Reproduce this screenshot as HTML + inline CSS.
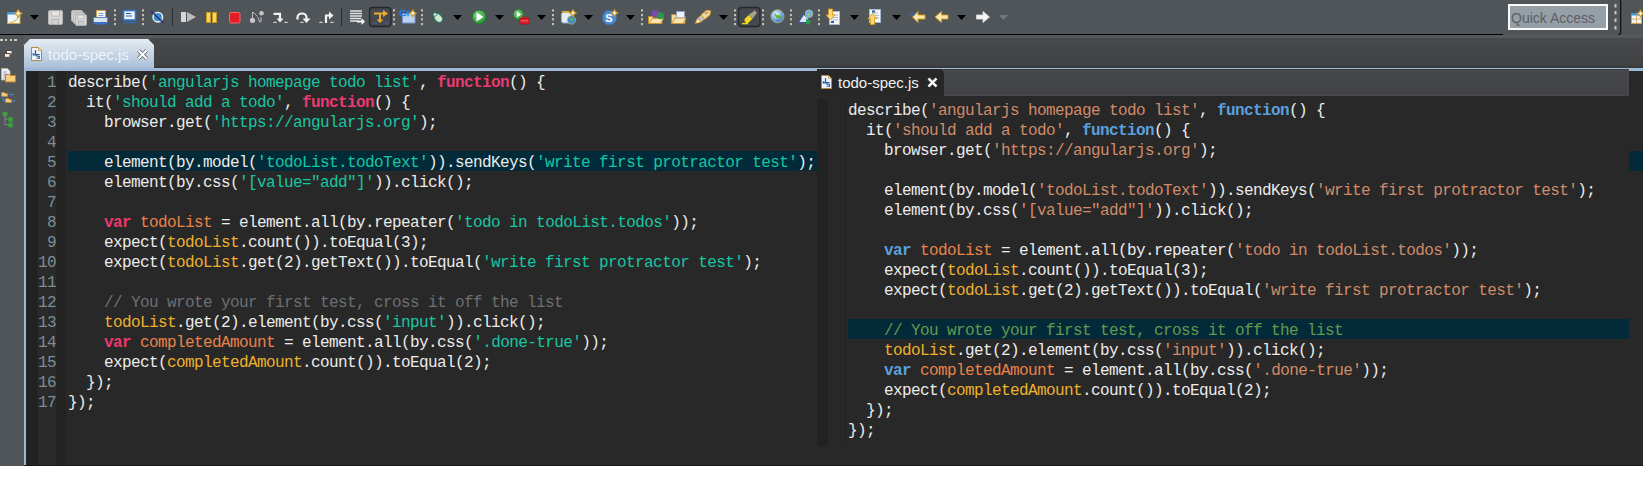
<!DOCTYPE html>
<html><head><meta charset="utf-8">
<style>
*{margin:0;padding:0;box-sizing:border-box}
html,body{width:1643px;height:489px;overflow:hidden;background:#fff}
body{position:relative;font-family:"Liberation Sans",sans-serif}
.a{position:absolute}
#tb{left:0;top:0;width:1643px;height:35px;background:#50555a}
#tbl2{left:0;top:35px;width:1643px;height:3px;background:#54595d}
#tbline{left:0;top:34px;width:1503px;height:1px;background:#020202}
#main{left:0;top:35px;width:1643px;height:431px;background:#54595d}
#side{left:0;top:35px;width:24px;height:431px;background:#50565a}
#tabbar{left:150px;top:38px;width:1493px;height:30px;background:linear-gradient(#48494c,#404143 95%,#38393a 95%)}
#tab1{left:24px;top:39px;width:130px;height:30px;clip-path:polygon(6px 0,124px 0,130px 6px,130px 30px,0 30px,0 6px);background:linear-gradient(#e6ecf2,#a7bdd7)}
#blue-h{left:24px;top:68px;width:1619px;height:3px;background:#9db8d9}
#blue-v{left:24px;top:68px;width:2px;height:398px;background:#9db8d9}
#ed{left:26px;top:71px;width:1617px;height:395px;background:#282828}
#c1{left:26px;top:71px;width:12px;height:395px;background:#222222}
#c2{left:38px;top:71px;width:18px;height:395px;background:#2a2a2a}
#c3{left:56px;top:71px;width:10px;height:395px;background:#232323}
#hl1{left:68px;top:151px;width:1575px;height:20px;background:#032a38}
#edbot{left:24px;top:465px;width:1619px;height:1px;background:#1a1a1a}
pre{font-family:"Liberation Mono",monospace;font-size:16px;letter-spacing:-0.6px;line-height:20px;color:#ececec;white-space:pre}
#nums{left:38px;top:73px;width:18px;text-align:right;color:#7d8d95}
#code1{left:68px;top:73px}
#code1 .s{color:#17c6a3}
#code1 .k{color:#ea3a72;font-weight:bold}
#code1 .vd{color:#e8834a}
#code1 .vr{color:#eeb12c}
#code1 .c{color:#6c7074}
.ttl{font-size:15px;white-space:nowrap}
#t1txt{left:48px;top:46px;color:#eef3f8}
/* overlay */
#ov{left:817px;top:69px;width:812px;height:396px;background:#282828;overflow:hidden}
#ovbar{left:0;top:0;width:812px;height:27px;background:linear-gradient(#3a3b3c 1px,#47484b 1px,#424345);border-bottom:1px solid #4a4a4c;border-right:1px solid #4a4a4c}
#ovtab{left:0;top:0;width:127px;height:27px;background:#272727;border-radius:0 5px 0 0}
#ovc1{left:0;top:30px;width:11px;height:347px;background:#222222}
#ovln{left:28px;top:30px;width:1px;height:347px;background:#222222}
#hl2{left:31px;top:250px;width:781px;height:20px;background:#032a38}
#code2{left:31px;top:32px}
#code2 .s{color:#d08b68}
#code2 .k{color:#5ba0de;font-weight:bold}
#code2 .vd{color:#e8834a}
#code2 .vr{color:#eeb12c}
#code2 .c{color:#62994f}
#t2txt{left:21px;top:5px;color:#f0f0f0}
#qa{left:1508px;top:4px;width:100px;height:26px;border:2px solid #fafafa;background:#969ea6}
#qatxt{left:1511px;top:10px;font-size:14px;color:#5b5f68}
</style></head><body>
<div class="a" id="tb"></div>
<div class="a" id="tbline"></div>
<div class="a" id="main"></div>
<div class="a" id="tbl2"></div>
<div class="a" id="side"></div>
<div class="a" id="tabbar"></div>
<div class="a" id="tab1"></div>
<div class="a ttl" id="t1txt">todo-spec.js</div>
<div class="a" id="blue-h"></div>
<div class="a" id="blue-v"></div>
<div class="a" id="ed"></div>
<div class="a" id="c1"></div>
<div class="a" id="c2"></div>
<div class="a" id="c3"></div>
<div class="a" id="hl1"></div>
<div class="a" id="edbot"></div>
<pre class="a" id="nums">1
2
3
4
5
6
7
8
9
10
11
12
13
14
15
16
17</pre>
<pre class="a" id="code1">describe(<span class="s">&#x27;angularjs homepage todo list&#x27;</span>, <span class="k">function</span>() {
  it(<span class="s">&#x27;should add a todo&#x27;</span>, <span class="k">function</span>() {
    browser.get(<span class="s">&#x27;https://angularjs.org&#x27;</span>);

    element(by.model(<span class="s">&#x27;todoList.todoText&#x27;</span>)).sendKeys(<span class="s">&#x27;write first protractor test&#x27;</span>);
    element(by.css(<span class="s">&#x27;[value=&quot;add&quot;]&#x27;</span>)).click();

    <span class="k">var</span> <span class="vd">todoList</span> = element.all(by.repeater(<span class="s">&#x27;todo in todoList.todos&#x27;</span>));
    expect(<span class="vr">todoList</span>.count()).toEqual(3);
    expect(<span class="vr">todoList</span>.get(2).getText()).toEqual(<span class="s">&#x27;write first protractor test&#x27;</span>);

    <span class="c">// You wrote your first test, cross it off the list</span>
    <span class="vr">todoList</span>.get(2).element(by.css(<span class="s">&#x27;input&#x27;</span>)).click();
    <span class="k">var</span> <span class="vd">completedAmount</span> = element.all(by.css(<span class="s">&#x27;.done-true&#x27;</span>));
    expect(<span class="vr">completedAmount</span>.count()).toEqual(2);
  });
});</pre>
<div class="a" id="ov">
 <div class="a" id="ovbar"></div>
 <div class="a" id="ovtab"></div>
 <div class="a ttl" id="t2txt">todo-spec.js</div>
 <div class="a" id="ovc1"></div>
 <div class="a" id="ovln"></div>
 <div class="a" id="hl2"></div>
 <pre class="a" id="code2">describe(<span class="s">&#x27;angularjs homepage todo list&#x27;</span>, <span class="k">function</span>() {
  it(<span class="s">&#x27;should add a todo&#x27;</span>, <span class="k">function</span>() {
    browser.get(<span class="s">&#x27;https://angularjs.org&#x27;</span>);

    element(by.model(<span class="s">&#x27;todoList.todoText&#x27;</span>)).sendKeys(<span class="s">&#x27;write first protractor test&#x27;</span>);
    element(by.css(<span class="s">&#x27;[value=&quot;add&quot;]&#x27;</span>)).click();

    <span class="k">var</span> <span class="vd">todoList</span> = element.all(by.repeater(<span class="s">&#x27;todo in todoList.todos&#x27;</span>));
    expect(<span class="vr">todoList</span>.count()).toEqual(3);
    expect(<span class="vr">todoList</span>.get(2).getText()).toEqual(<span class="s">&#x27;write first protractor test&#x27;</span>);

    <span class="c">// You wrote your first test, cross it off the list</span>
    <span class="vr">todoList</span>.get(2).element(by.css(<span class="s">&#x27;input&#x27;</span>)).click();
    <span class="k">var</span> <span class="vd">completedAmount</span> = element.all(by.css(<span class="s">&#x27;.done-true&#x27;</span>));
    expect(<span class="vr">completedAmount</span>.count()).toEqual(2);
  });
});</pre>
</div>
<div class="a" id="qa"></div>
<div class="a" id="qatxt">Quick Access</div>
<svg class="a" style="left:0;top:0" width="1643" height="35"><rect x="7.5" y="12.5" width="12.5" height="11" fill="#eef6fc" stroke="#c9a24a"/><rect x="7" y="12" width="9" height="2.5" fill="#3b9ad9"/><path d="M9 23 Q17 22 19 15" stroke="#e5c36a" fill="none" stroke-width="1.2"/><path d="M18.2 9.600000000000001L19.567999999999998 12.032L22.0 13.4L19.567999999999998 14.768L18.2 17.2L16.832 14.768L14.399999999999999 13.4L16.832 12.032z" fill="#fff4c8" stroke="#c8922a" stroke-width="1.1" stroke-linejoin="round"/><path d="M30 15h9l-4.5 5z" fill="#000"/><rect x="48.5" y="10.5" width="14" height="14" rx="1.5" fill="#d6d6d6" stroke="#b4b4b4"/><rect x="51.5" y="11" width="8.0" height="5.0" fill="#e6e6e6" stroke="#b0b0b0" stroke-width=".7"/><rect x="52.0" y="19.5" width="6.5" height="5.0" fill="#cfcfcf" stroke="#a8a8a8" stroke-width=".7"/><rect x="71.5" y="10.5" width="11" height="11" rx="1.5" fill="#d6d6d6" stroke="#b4b4b4"/><rect x="73.75" y="11" width="6.285714285714286" height="3.9285714285714284" fill="#e6e6e6" stroke="#b0b0b0" stroke-width=".7"/><rect x="74.14285714285714" y="17.464285714285715" width="5.107142857142857" height="3.9285714285714284" fill="#cfcfcf" stroke="#a8a8a8" stroke-width=".7"/><rect x="73.5" y="12.5" width="11" height="11" rx="1.5" fill="#d6d6d6" stroke="#b4b4b4"/><rect x="75.75" y="13" width="6.285714285714286" height="3.9285714285714284" fill="#e6e6e6" stroke="#b0b0b0" stroke-width=".7"/><rect x="76.14285714285714" y="19.464285714285715" width="5.107142857142857" height="3.9285714285714284" fill="#cfcfcf" stroke="#a8a8a8" stroke-width=".7"/><rect x="75.5" y="14.5" width="11" height="11" rx="1.5" fill="#d6d6d6" stroke="#b4b4b4"/><rect x="77.75" y="15" width="6.285714285714286" height="3.9285714285714284" fill="#e6e6e6" stroke="#b0b0b0" stroke-width=".7"/><rect x="78.14285714285714" y="21.464285714285715" width="5.107142857142857" height="3.9285714285714284" fill="#cfcfcf" stroke="#a8a8a8" stroke-width=".7"/><rect x="96.5" y="10.5" width="9" height="9" fill="#f4f4f4" stroke="#c9a24a"/><path d="M98.5 13.5h5M98.5 15.5h5" stroke="#5a7cc0" stroke-width=".7"/><rect x="93.5" y="17.5" width="14" height="5" rx="1" fill="#d8e2ee" stroke="#5a86c8"/><rect x="94" y="22" width="13" height="2.5" fill="#3e6fc2"/><rect x="114" y="9.3" width="2" height="2.2" fill="#c4beab"/><rect x="114" y="14" width="2" height="2.2" fill="#c4beab"/><rect x="114" y="18.2" width="2" height="2.2" fill="#c4beab"/><rect x="114" y="23" width="2" height="2.2" fill="#c4beab"/><rect x="123.5" y="10.5" width="12" height="9.5" fill="#eef4fc" stroke="#2f74c8" stroke-width="1.6"/><path d="M126 13.5h5M126 16h6" stroke="#2f5fa8" stroke-width="1"/><path d="M124 22.6h11" stroke="#2f6cc0" stroke-width="1.2"/><rect x="142" y="9.3" width="2" height="2.2" fill="#c4beab"/><rect x="142" y="14" width="2" height="2.2" fill="#c4beab"/><rect x="142" y="18.2" width="2" height="2.2" fill="#c4beab"/><rect x="142" y="23" width="2" height="2.2" fill="#c4beab"/><circle cx="157.8" cy="17.2" r="4.8" fill="#3d8fc4" stroke="#f0f6fa" stroke-width="1.4"/><path d="M151 11l12.5 12" stroke="#1c2f86" stroke-width="1.4"/><rect x="172" y="8" width="1" height="18" fill="#2a2d30"/><rect x="181" y="12" width="5" height="10" fill="#d6d6d6"/><path d="M187 12l9 5-9 5z" fill="#bdbdbd"/><rect x="206.5" y="12.5" width="4" height="10" fill="#f1d56a" stroke="#c49a22"/><rect x="212.5" y="12.5" width="4" height="10" fill="#f1d56a" stroke="#c49a22"/><rect x="229.5" y="12.5" width="10.5" height="10.5" rx="1.5" fill="#e31e24" stroke="#f36a6a"/><circle cx="252.5" cy="20.3" r="2.6" fill="#c8c8c8"/><circle cx="261.5" cy="13.3" r="2.3" fill="#c8c8c8"/><path d="M252.5 12v6M253 12l4.5 4.5M258 17.5l2 5M261 17v5" stroke="#bcbcbc" stroke-width="1" fill="none"/><path d="M273.5 13.8h6.5v6" stroke="#f2f2f2" stroke-width="2.2" fill="none"/><path d="M276.5 18.5h7l-3.5 4z" fill="#f2f2f2"/><path d="M273 23a2 1.5 0 0 1 4 0zM284 23a2 1.5 0 0 1 4 0z" fill="#c8c8c8"/><path d="M297.5 19.5v-2a4.5 4 0 0 1 9 0v2" stroke="#f2f2f2" stroke-width="2.2" fill="none"/><path d="M302.5 18.5h8l-4 4.5z" fill="#f2f2f2"/><path d="M300 23a2 1.5 0 0 1 4 0z" fill="#c8c8c8"/><path d="M326 23v-7.5h4" stroke="#f2f2f2" stroke-width="2.2" fill="none"/><path d="M329 11.5l4.5 4-4.5 4z" fill="#f2f2f2"/><path d="M319 23a2 1.5 0 0 1 4 0zM330 23a2 1.5 0 0 1 4 0z" fill="#c8c8c8"/><rect x="341" y="8" width="1" height="18" fill="#2a2d30"/><path d="M350 11h12M350 13.5h12M350 16h12M350 18.5h11M350 21h8" stroke="#e4e4e4" stroke-width="1.3"/><path d="M357 20.5h4.5v-2.5l3.5 3.5-3.5 3.5v-2.5h-4.5z" fill="#f5f5f5"/><rect x="369.5" y="7.5" width="21.5" height="19" rx="3" fill="#45494d" stroke="#26292c" stroke-width="1.3"/><path d="M374 13.5h10M380 13.5v8" stroke="#e8a82a" stroke-width="2"/><path d="M383 10l5 3.5-5 3.5z" fill="#e8a82a"/><path d="M376.5 19.5h7l-3.5 3.5z" fill="#e8a82a"/><path d="M373 23.5a2 1.3 0 0 1 3.5 0M385 23.5a2 1.3 0 0 1 3.5 0" stroke="#3d6fb8" stroke-width="1" fill="none"/><rect x="393" y="9.3" width="2" height="2.2" fill="#c4beab"/><rect x="393" y="14" width="2" height="2.2" fill="#c4beab"/><rect x="393" y="18.2" width="2" height="2.2" fill="#c4beab"/><rect x="393" y="23" width="2" height="2.2" fill="#c4beab"/><rect x="402.5" y="13.5" width="12.5" height="9.5" fill="#b9d3f0" stroke="#7d96c9"/><text x="399.3" y="15.8" font-family="Liberation Sans" font-size="9.5" fill="#1a80ff" stroke="#1a80ff" stroke-width=".35">Gr</text><path d="M412.8 9.8L414.06 12.040000000000001L416.3 13.3L414.06 14.56L412.8 16.8L411.54 14.56L409.3 13.3L411.54 12.040000000000001z" fill="#fff4c8" stroke="#c8922a" stroke-width="1.1" stroke-linejoin="round"/><rect x="421" y="9.3" width="2" height="2.2" fill="#c4beab"/><rect x="421" y="14" width="2" height="2.2" fill="#c4beab"/><rect x="421" y="18.2" width="2" height="2.2" fill="#c4beab"/><rect x="421" y="23" width="2" height="2.2" fill="#c4beab"/><path d="M434.5 10.5l.5 2.5M438.5 11.5l-1 2.5M430.5 14.5l3 .5M443.5 15.5l-3-.5M431.5 18.5l2.5-.5M444.5 19.5l-2.5-1M435.5 23l-.5-3M439.5 24.5l-1-2.5" stroke="#2a6a4a" stroke-width="1.2"/><ellipse cx="438.3" cy="18" rx="3.6" ry="4.8" fill="#cfeac4" stroke="#2a7a80" stroke-width="1" transform="rotate(-40 438.3 18)"/><circle cx="435" cy="14.5" r="1.7" fill="#e8f4e8" stroke="#2a7a80" stroke-width=".8"/><path d="M453 15h9l-4.5 5z" fill="#000"/><defs><radialGradient id="gr" cx=".4" cy=".35" r=".7"><stop offset="0" stop-color="#8ad48a"/><stop offset="1" stop-color="#1f8a2a"/></radialGradient></defs><circle cx="479.2" cy="17" r="7" fill="url(#gr)" stroke="#1f7a2a" stroke-width="1"/><path d="M476.5 12.5l7 4.5-7 4.5z" fill="#fff"/><path d="M495 15h9l-4.5 5z" fill="#000"/><circle cx="518.5" cy="14.5" r="5.3" fill="url(#gr)" stroke="#1f7a2a" stroke-width=".8"/><path d="M516.8 11.5l4.5 3-4.5 3z" fill="#fff"/><rect x="520" y="18.5" width="9" height="5.5" fill="#e02028" stroke="#a81018" stroke-width=".8"/><path d="M522.5 18.5v-1.5h4v1.5" stroke="#c01820" stroke-width="1" fill="none"/><path d="M520.5 20.8h8" stroke="#f08080" stroke-width=".7"/><path d="M537 15h9l-4.5 5z" fill="#000"/><rect x="552" y="9.3" width="2" height="2.2" fill="#c4beab"/><rect x="552" y="14" width="2" height="2.2" fill="#c4beab"/><rect x="552" y="18.2" width="2" height="2.2" fill="#c4beab"/><rect x="552" y="23" width="2" height="2.2" fill="#c4beab"/><rect x="561.5" y="12.5" width="11" height="10.5" rx="2" fill="#e2ecf6" stroke="#9aaec8"/><rect x="562" y="11" width="7" height="2" fill="#d9b14a"/><circle cx="571.5" cy="20" r="4.2" fill="#3a8ad0" stroke="#c9b06a" stroke-width=".7"/><path d="M570 18l2 2.5 1.5-2" stroke="#6dbb3a" stroke-width="1.3" fill="none"/><path d="M573 9.6L574.224 11.776L576.4 13L574.224 14.224L573 16.4L571.776 14.224L569.6 13L571.776 11.776z" fill="#fff4c8" stroke="#c8922a" stroke-width="1.1" stroke-linejoin="round"/><path d="M584 15h9l-4.5 5z" fill="#000"/><path d="M606 10.7h6.2l4.3 4.3v5.5l-4.3 4.3h-6.2l-3.4-4.3v-5.5z" fill="#4a8ad0" stroke="#3a6aa8" stroke-width=".6"/><text x="605.3" y="22" font-family="Liberation Sans" font-size="11" font-weight="bold" fill="#fff">S</text><path d="M614.5 9.6L615.724 11.776L617.9 13L615.724 14.224L614.5 16.4L613.276 14.224L611.1 13L613.276 11.776z" fill="#fff4c8" stroke="#c8922a" stroke-width="1.1" stroke-linejoin="round"/><path d="M626 15h9l-4.5 5z" fill="#000"/><rect x="641" y="9.3" width="2" height="2.2" fill="#c4beab"/><rect x="641" y="14" width="2" height="2.2" fill="#c4beab"/><rect x="641" y="18.2" width="2" height="2.2" fill="#c4beab"/><rect x="641" y="23" width="2" height="2.2" fill="#c4beab"/><path d="M648.5 16.5h4l1 1.5h8.5v5.5h-13.5z" fill="#f5dc9a" stroke="#c88a2a"/><path d="M649 23.5l3-5h11.5l-3 5z" fill="#f8e4ae" stroke="#c88a2a" stroke-width=".8"/><circle cx="655.3" cy="13.5" r="3.5" fill="#7b4ab0"/><circle cx="660.5" cy="15.7" r="3.5" fill="#2a9a4a"/><path d="M671.5 14.5h4l1 1.5h8.5v7.5h-13.5z" fill="#f5dc9a" stroke="#c88a2a"/><rect x="676.5" y="11.5" width="8" height="6.5" fill="#eef2fa" stroke="#8aa0c8" stroke-width=".8"/><path d="M672 23.5l3-5.5h11l-3 5.5z" fill="#f8e4ae" stroke="#c88a2a" stroke-width=".8"/><g transform="translate(703 17) rotate(-40) scale(.86 .82)"><path d="M-11.5 0l6-3.2v6.4z" fill="#fff6c8" stroke="#e8a030" stroke-width=".9"/><rect x="-5.5" y="-3.2" width="5.5" height="6.4" fill="#c4c0c8" stroke="#a88850" stroke-width=".8"/><path d="M0 -3.4h8l3.2 3.4-3.2 3.4h-8z" fill="#f4dc98" stroke="#f0a020" stroke-width="1"/><circle cx="5" cy="-1" r=".8" fill="#2a5ab0"/><circle cx="7" cy="-1" r=".8" fill="#2a5ab0"/></g><path d="M719 15h9l-4.5 5z" fill="#000"/><rect x="734" y="9.3" width="2" height="2.2" fill="#c4beab"/><rect x="734" y="14" width="2" height="2.2" fill="#c4beab"/><rect x="734" y="18.2" width="2" height="2.2" fill="#c4beab"/><rect x="734" y="23" width="2" height="2.2" fill="#c4beab"/><rect x="738.5" y="7.5" width="21.5" height="19" rx="3" fill="#45494d" stroke="#26292c" stroke-width="1.3"/><path d="M742 23.6h6" stroke="#f2d21a" stroke-width="1.4"/><g transform="translate(750 17.5) rotate(-45) scale(.82 .7)"><path d="M-8 -1.5l2-2.3h7v7.6h-9z" fill="#f4d820"/><path d="M1 -3.8l9 1.6v4.4l-9 1.6z" fill="#a8a288" stroke="#8a8670" stroke-width=".5"/></g><rect x="762" y="9.3" width="2" height="2.2" fill="#c4beab"/><rect x="762" y="14" width="2" height="2.2" fill="#c4beab"/><rect x="762" y="18.2" width="2" height="2.2" fill="#c4beab"/><rect x="762" y="23" width="2" height="2.2" fill="#c4beab"/><defs><radialGradient id="gl" cx=".4" cy=".35" r=".7"><stop offset="0" stop-color="#f4f8f0"/><stop offset=".45" stop-color="#8cc4e8"/><stop offset="1" stop-color="#2f6ed0"/></radialGradient></defs><circle cx="777.5" cy="16.3" r="6.5" fill="url(#gl)" stroke="#c8b880" stroke-width=".8"/><path d="M775 14l2 3 1.5-1 1 2.5 2-3" stroke="#6aa83a" stroke-width="1.8" fill="none"/><circle cx="777.5" cy="20" r=".8" fill="#d02020"/><rect x="790" y="9.3" width="2" height="2.2" fill="#c4beab"/><rect x="790" y="14" width="2" height="2.2" fill="#c4beab"/><rect x="790" y="18.2" width="2" height="2.2" fill="#c4beab"/><rect x="790" y="23" width="2" height="2.2" fill="#c4beab"/><path d="M798.5 22.5l5-8 4 3 3 5z" fill="#dce8f6" stroke="#2a4aa8" stroke-width=".9"/><circle cx="809" cy="13.7" r="3.8" fill="#6ab0e0" stroke="#d8d0a0" stroke-width=".6"/><circle cx="808.5" cy="14.5" r="1.5" fill="#a8c858"/><path d="M806 18.5v6.5l2-1.5 1.5 1.5 1-1-1.5-1.5 3-.5z" fill="#2aa04a"/><rect x="818" y="9.3" width="2" height="2.2" fill="#c4beab"/><rect x="818" y="14" width="2" height="2.2" fill="#c4beab"/><rect x="818" y="18.2" width="2" height="2.2" fill="#c4beab"/><rect x="818" y="23" width="2" height="2.2" fill="#c4beab"/><rect x="829.5" y="11.5" width="10" height="13" fill="#f4f8fc" stroke="#a8b8d0"/><path d="M832 15h6M832 17.5h6M832 20h6" stroke="#9ab" stroke-width=".8"/><rect x="831" y="21" width="3" height="2" fill="#2a5aa8"/><path d="M828.5 9v6h-2.5l4.5 5 4.5-5h-2.5v-6z" fill="#f8d880" stroke="#d89a1a" stroke-width=".9"/><path d="M850 15h9l-4.5 5z" fill="#000"/><rect x="869.5" y="9.5" width="11" height="13" fill="#f4f8fc" stroke="#a8b8d0"/><path d="M872 13h6M874 15.5h5M875 18h4" stroke="#9ab" stroke-width=".8"/><rect x="872" y="10.5" width="3" height="2" fill="#2a5aa8"/><path d="M870.5 24.5v-6h-2.5l4.5-5 4.5 5h-2.5v6z" fill="#f8d880" stroke="#d89a1a" stroke-width=".9"/><path d="M892 15h9l-4.5 5z" fill="#000"/><path d="M925 15h-7v-3.5l-5.5 5.5 5.5 5.5v-3.5h7z" fill="#fae8a8" stroke="#d89a1a" stroke-width=".9"/><path d="M909.5 12.5a1.6 1.6 0 1 0 3 1M912 12.5a1.6 1.6 0 1 0 3 1" stroke="#2a6ad0" stroke-width="1" fill="none"/><path d="M948 15h-6.5v-3.5l-6.5 5.5 6.5 5.5v-3.5h6.5z" fill="#fae8a8" stroke="#d89a1a" stroke-width=".9"/><path d="M957 15h9l-4.5 5z" fill="#000"/><path d="M976.5 15h6.5v-3.5l6.5 5.5-6.5 5.5v-3.5h-6.5z" fill="#f4f4f4" stroke="#d8d8d8" stroke-width=".9"/><path d="M999 15h9l-4.5 5z" fill="#75797d"/><rect x="1614.5" y="4" width="2" height="3.5" fill="#c9c3b0"/><rect x="1614.5" y="11" width="2" height="3.5" fill="#c9c3b0"/><rect x="1614.5" y="18.5" width="2" height="3.5" fill="#c9c3b0"/><rect x="1614.5" y="26" width="2" height="3.5" fill="#c9c3b0"/><rect x="1620" y="0" width="1.3" height="34" fill="#141414"/><rect x="1618" y="33.3" width="3" height="1.3" fill="#141414"/><rect x="1631.5" y="13.5" width="10" height="10" fill="#eef4fa" stroke="#c9a24a"/><rect x="1631" y="13" width="11" height="2.5" fill="#3b9ad9"/><path d="M1636.5 15v9M1632 19h10" stroke="#c9a24a" stroke-width=".8"/><path d="M1640.5 10.1L1641.724 12.276L1643.9 13.5L1641.724 14.724L1640.5 16.9L1639.276 14.724L1637.1 13.5L1639.276 12.276z" fill="#fff4c8" stroke="#c8922a" stroke-width="1.1" stroke-linejoin="round"/></svg><svg class="a" style="left:0;top:0" width="24" height="140"><rect x="0" y="39" width="3" height="2" fill="#cfc8b8"/><rect x="5" y="39" width="2" height="2" fill="#cfc8b8"/><rect x="10" y="39" width="2" height="2" fill="#cfc8b8"/><rect x="14" y="39" width="3" height="2" fill="#cfc8b8"/><path d="M23.5 45l6-6" stroke="#f4f4f4" stroke-width="1" stroke-dasharray="1 1"/><rect x="6.5" y="50.5" width="5.5" height="3.8" fill="#f2f2f2" stroke="#5a4a3a" stroke-width="1"/><rect x="4.5" y="53.5" width="5.5" height="3.8" fill="#f2f2f2" stroke="#5a4a3a" stroke-width="1"/><path d="M1.5 68.5h6l2.5 2.5v9h-8.5z" fill="#f0f2f6" stroke="#c8b080" stroke-width=".9"/><path d="M3 72h4M3 74h4M3 76h3M3 78h3" stroke="#6a8ac0" stroke-width=".7"/><path d="M5.5 74.5h3.5l1 1h5.5v6.5h-10z" fill="#f6cf7a" stroke="#c8782a" stroke-width="1"/><path d="M1.5 92.5h3l.8 1h2.2v3h-6z" fill="#f3c87a" stroke="#c8862a" stroke-width=".6"/><path d="M9 94.5h5" stroke="#3a8ad8" stroke-width="1.2"/><path d="M3 96v4.5h2" stroke="#3a8ad8" stroke-width="1" fill="none"/><path d="M5.5 98.5h3l.8 1h2.2v3h-6z" fill="#f3c87a" stroke="#c8862a" stroke-width=".6"/><path d="M12.5 101h3" stroke="#3a8ad8" stroke-width="1.2"/><path d="M5 113v12M5 119h5M5 124.5h5" stroke="#8a9090" stroke-width=".8"/><circle cx="5" cy="114" r="2.6" fill="#3aa03a"/><circle cx="10.5" cy="119.5" r="2.6" fill="#3aa03a"/><circle cx="10.5" cy="125" r="2.6" fill="#3aa03a"/></svg><svg class="a" style="left:31px;top:47px" width="12" height="15"><path d="M.5 .5h7l3 3v10h-10z" fill="#eef2fa" stroke="#b08a40"/><path d="M7.5 .5v3h3" fill="#e8d8a0" stroke="#c8a050" stroke-width=".8"/><path d="M4.5 3.2v4.6h-2.2v-1.6M4.5 7.8h1.5" stroke="#1f5aa8" stroke-width="1.3" fill="none"/><path d="M8.6 7.5h-2.6v1.8h2.4v1.9h-2.8" stroke="#1f5aa8" stroke-width="1.1" fill="none"/></svg><svg class="a" style="left:137px;top:49px" width="11" height="11"><path d="M1.5 1.5l8 8M9.5 1.5l-8 8" stroke="#555" stroke-width="3.6"/><path d="M1.5 1.5l8 8M9.5 1.5l-8 8" stroke="#fff" stroke-width="2.2"/></svg><svg class="a" style="left:821px;top:75px" width="12" height="15"><path d="M.5 .5h7l3 3v10h-10z" fill="#eef2fa" stroke="#b08a40"/><path d="M7.5 .5v3h3" fill="#e8d8a0" stroke="#c8a050" stroke-width=".8"/><path d="M4.5 3.2v4.6h-2.2v-1.6M4.5 7.8h1.5" stroke="#1f5aa8" stroke-width="1.3" fill="none"/><path d="M8.6 7.5h-2.6v1.8h2.4v1.9h-2.8" stroke="#1f5aa8" stroke-width="1.1" fill="none"/></svg><svg class="a" style="left:927px;top:77px" width="11" height="11"><path d="M1.5 1.5l8 8M9.5 1.5l-8 8" stroke="#555" stroke-width="3.6"/><path d="M1.5 1.5l8 8M9.5 1.5l-8 8" stroke="#fff" stroke-width="2.2"/></svg>
</body></html>
